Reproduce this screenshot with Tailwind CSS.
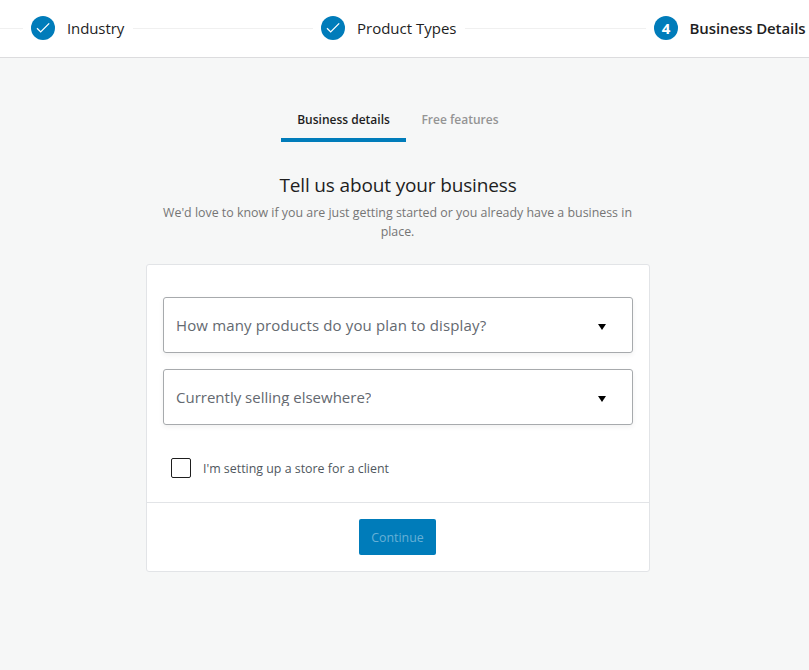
<!DOCTYPE html>
<html lang="en"><head><meta charset="utf-8"><title>Business Details</title>
<script src="https://cdn.jsdelivr.net/npm/@tailwindcss/browser@4"></script></head>
<body class="bg-[#f6f7f7] font-['Open_Sans','Noto_Sans',sans-serif] text-[#1e1e1e] h-[670px] overflow-hidden">
<header class="h-[58px] bg-white border-b border-[#dcdcde] flex items-start pt-4 text-[15px] leading-6 whitespace-nowrap overflow-hidden">
  <div class="w-[23px] shrink-0 mt-3 h-px bg-[#f0f0f0]"></div>
  <div class="flex w-[102px] ml-2 shrink-0">
    <svg class="size-6 mr-3 shrink-0" viewBox="0 0 24 24"><circle cx="12" cy="12" r="12" fill="#007cba"/><path d="M6 12.200l3.700 3.700 8.500-8.500" fill="none" stroke="#fff" stroke-width="1.300"/></svg>
    <span class="tracking-[-0.1px]">Industry</span>
  </div>
  <div class="w-[180px] shrink-0 mt-3 h-px bg-[#f0f0f0]"></div>
  <div class="flex w-[144px] ml-2 shrink-0">
    <svg class="size-6 mr-3 shrink-0" viewBox="0 0 24 24"><circle cx="12" cy="12" r="12" fill="#007cba"/><path d="M6 12.200l3.700 3.700 8.500-8.500" fill="none" stroke="#fff" stroke-width="1.300"/></svg>
    <span>Product Types</span>
  </div>
  <div class="w-[181px] shrink-0 mt-3 h-px bg-[#f0f0f0]"></div>
  <div class="flex ml-2 shrink-0 font-semibold">
    <span class="size-6 mr-3 rounded-full bg-[#007cba] text-white text-center font-bold">4</span>
    <span class="-ml-[0.5px] tracking-[-0.1px]">Business Details</span>
  </div>
</header>
<main class="w-[504px] ml-[146px]">
  <nav class="flex justify-center pt-[38px] pr-[2px] font-semibold text-xs">
    <div class="w-[125px] h-[46px] pl-px text-center leading-[48px] border-b-4 border-[#007cba]">Business details</div>
    <div class="w-[108px] h-[46px] pl-px text-center leading-[48px] text-[#949494]">Free features</div>
  </nav>
  <h1 class="text-center mt-[29px] text-[19px] leading-7 tracking-[-0.15px]">Tell us about your business</h1>
  <p class="text-center mt-1 -ml-px leading-[19px] text-[#757575] text-[12.4px]">We'd love to know if you are just getting started or you already have a business in<br>place.</p>
  <section class="mt-[23px] h-[308px] bg-white border border-[#e2e4e7] rounded-[3px]">
    <div class="px-4 pt-8 h-[237px]">
      <div class="h-14 border border-[#a7aaad] rounded-[3px] shadow-[0_2px_5px_rgba(0,0,0,0.06)] flex items-center justify-between pl-3 pr-[26px] text-[15px] text-[#646970]"><span class="tracking-[0.14px]">How many products do you plan to display?</span><svg class="w-2 h-[6px] mt-1" viewBox="0 0 8 6"><path d="M0 0h8L4 6z" fill="#000"/></svg></div>
      <div class="mt-4 h-14 border border-[#a7aaad] rounded-[3px] shadow-[0_2px_5px_rgba(0,0,0,0.06)] flex items-center justify-between pl-3 pr-[26px] text-[15px] text-[#646970]"><span class="leading-[18px] h-[18px] overflow-hidden">Currently selling elsewhere?</span><svg class="w-2 h-[6px] mt-1" viewBox="0 0 8 6"><path d="M0 0h8L4 6z" fill="#000"/></svg></div>
      <label class="flex items-center mt-[33px] ml-2 h-5 text-[12.4px] text-[#50575e]"><i class="size-5 mr-3 border border-[#1e1e1e] rounded-[2px]"></i><span class="pt-[2px]">I'm setting up a store for a client</span></label>
    </div>
    <div class="border-t border-[#e2e4e7] pt-4 pr-[2px] flex justify-center"><button class="w-[77px] h-9 pt-[2px] pl-px rounded-[2px] bg-[#007cba] text-[#66b0d6] text-[12.4px]">Continue</button></div>
  </section>
</main>
</body></html>
